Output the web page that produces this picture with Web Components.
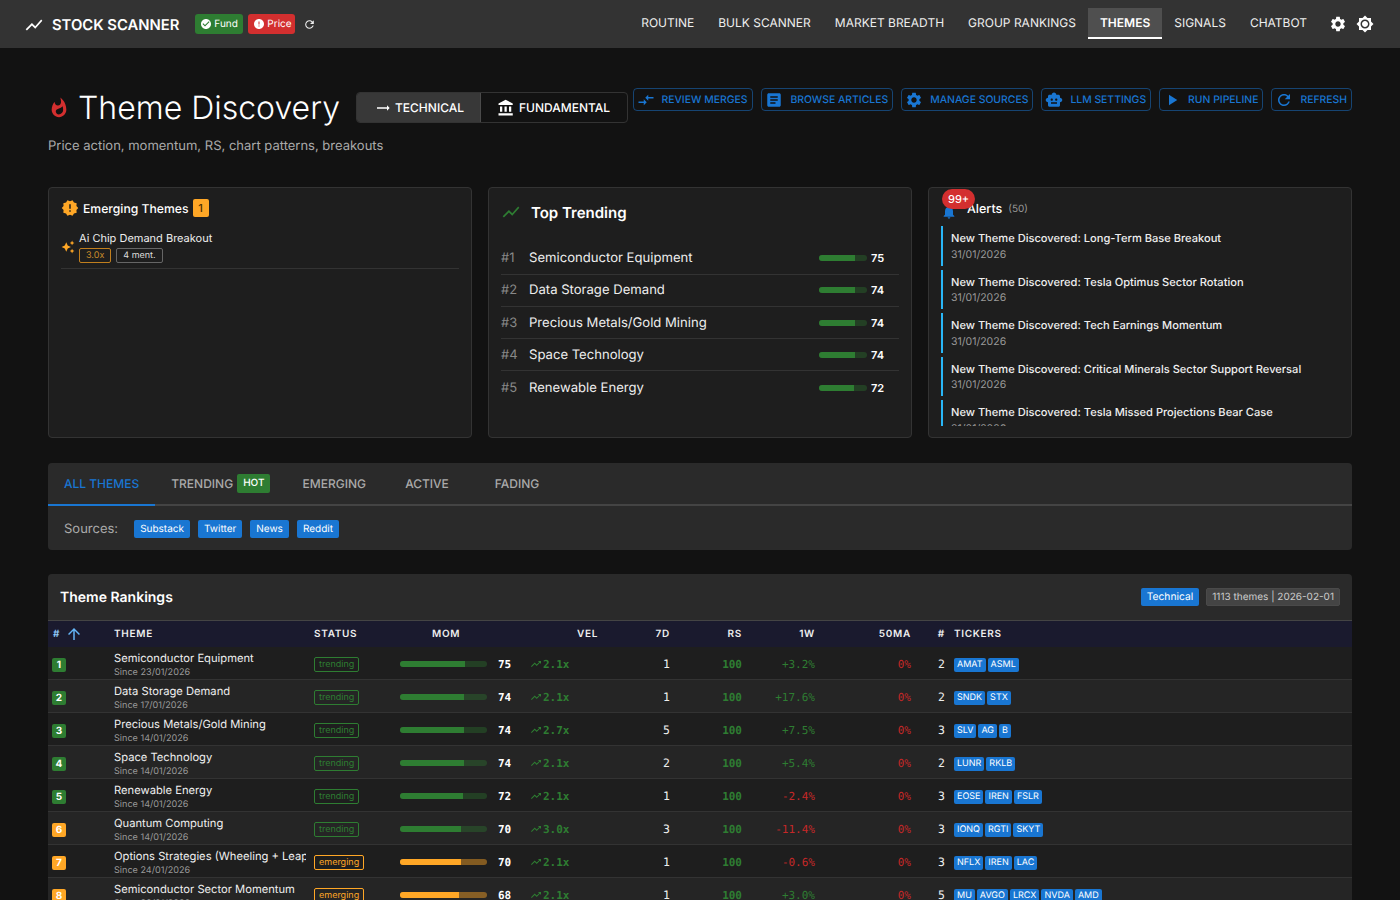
<!DOCTYPE html>
<html lang="en">
<head>
<meta charset="utf-8">
<title>Theme Discovery</title>
<style>
    html, body { margin: 0; height: 100%; overflow: hidden; background: #121212; }
    body { font-family: Inter, "Liberation Sans", sans-serif; color: #fff; text-rendering: geometricPrecision; }
    main { display: block; padding: 40px 48px 0; }
    .cards { display: grid; grid-template-columns: repeat(3, 1fr); gap: 16px; margin-bottom: 25px; }
</style>
</head>
<body>
<stock-navbar></stock-navbar>
<main>
    <page-header></page-header>
    <div class="cards">
        <emerging-card></emerging-card>
        <trending-card></trending-card>
        <alerts-card></alerts-card>
    </div>
    <theme-tabs></theme-tabs>
    <rankings-table></rankings-table>
</main>

<script>
const ICONS = {
    chart: 'M3.5 18.49l6-6.01 4 4L22 6.92l-1.41-1.41-7.09 7.97-4-4L2 16.99z',
    check: 'M12 2C6.48 2 2 6.48 2 12s4.48 10 10 10 10-4.48 10-10S17.52 2 12 2zm-2 15l-5-5 1.41-1.41L10 14.17l7.59-7.59L19 8l-9 9z',
    error: 'M12 2C6.48 2 2 6.48 2 12s4.48 10 10 10 10-4.48 10-10S17.52 2 12 2zm1 15h-2v-2h2v2zm0-4h-2V7h2v6z',
    refresh: 'M17.65 6.35C16.2 4.9 14.21 4 12 4c-4.42 0-7.99 3.58-7.99 8s3.57 8 7.99 8c3.73 0 6.84-2.55 7.73-6h-2.08c-.82 2.33-3.04 4-5.65 4-3.31 0-6-2.69-6-6s2.69-6 6-6c1.66 0 3.14.69 4.22 1.78L13 11h7V4l-2.35 2.35z',
    settings: 'M19.14 12.94c.04-.3.06-.61.06-.94 0-.32-.02-.64-.07-.94l2.03-1.58c.18-.14.23-.41.12-.61l-1.92-3.32c-.12-.22-.37-.29-.59-.22l-2.39.96c-.5-.38-1.03-.7-1.62-.94l-.36-2.54c-.04-.24-.24-.41-.48-.41h-3.84c-.24 0-.43.17-.47.41l-.36 2.54c-.59.24-1.13.57-1.62.94l-2.39-.96c-.22-.08-.47 0-.59.22L2.74 8.87c-.12.21-.08.47.12.61l2.03 1.58c-.05.3-.09.63-.09.94s.02.64.07.94l-2.03 1.58c-.18.14-.23.41-.12.61l1.92 3.32c.12.22.37.29.59.22l2.39-.96c.5.38 1.03.7 1.62.94l.36 2.54c.05.24.24.41.48.41h3.84c.24 0 .44-.17.47-.41l.36-2.54c.59-.24 1.13-.56 1.62-.94l2.39.96c.22.08.47 0 .59-.22l1.92-3.32c.12-.22.07-.47-.12-.61l-2.01-1.58zM12 15.6c-1.98 0-3.6-1.62-3.6-3.6s1.62-3.6 3.6-3.6 3.6 1.62 3.6 3.6-1.62 3.6-3.6 3.6z',
    sun: 'M20 8.69V4h-4.69L12 .69 8.69 4H4v4.69L.69 12 4 15.31V20h4.69L12 23.31 15.31 20H20v-4.69L23.31 12 20 8.69zM12 18c-3.31 0-6-2.69-6-6s2.69-6 6-6 6 2.69 6 6-2.69 6-6 6zm0-10c-2.21 0-4 1.79-4 4s1.79 4 4 4 4-1.79 4-4-1.79-4-4-4z',
    fire: 'M13.5.67s.74 2.65.74 4.8c0 2.06-1.35 3.73-3.41 3.73-2.07 0-3.63-1.67-3.63-3.73l.03-.36C5.21 7.51 4 10.62 4 14c0 4.42 3.58 8 8 8s8-3.58 8-8C20 8.61 17.41 3.8 13.5.67zM11.71 19c-1.78 0-3.22-1.4-3.22-3.14 0-1.62 1.05-2.76 2.81-3.12 1.77-.36 3.6-1.21 4.62-2.58.39 1.29.59 2.65.59 4.04 0 2.65-2.15 4.8-4.8 4.8z',
    flat: 'M22 12l-4-4v3H3v2h15v3z',
    bank: 'M4 10v7h3v-7H4zm6 0v7h3v-7h-3zM2 22h19v-3H2v3zm14-12v7h3v-7h-3zm-4.5-9L2 6v2h19V6l-9.5-5z',
    merge: 'M9.01 14H2v2h7.01v3L13 15l-3.99-4v3zm5.98-1v-3H22V8h-7.01V5L11 9l3.99 4z',
    article: 'M19 3H5c-1.1 0-2 .9-2 2v14c0 1.1.9 2 2 2h14c1.1 0 2-.9 2-2V5c0-1.1-.9-2-2-2zm-5 14H7v-2h7v2zm3-4H7v-2h10v2zm0-4H7V7h10v2z',
    robot: 'M20 9V7c0-1.1-.9-2-2-2h-3c0-1.66-1.34-3-3-3S9 3.34 9 5H6c-1.1 0-2 .9-2 2v2c-1.66 0-3 1.34-3 3s1.34 3 3 3v4c0 1.1.9 2 2 2h12c1.1 0 2-.9 2-2v-4c1.66 0 3-1.34 3-3s-1.34-3-3-3zM7.5 11.5c0-.83.67-1.5 1.5-1.5s1.5.67 1.5 1.5S9.83 13 9 13s-1.5-.67-1.5-1.5zM16 17H8v-2h8v2zm-1-4c-.83 0-1.5-.67-1.5-1.5S14.17 10 15 10s1.5.67 1.5 1.5S15.83 13 15 13z',
    play: 'M8 5v14l11-7z',
    release: 'M23 12l-2.44-2.78.34-3.68-3.61-.82-1.89-3.18L12 3 8.6 1.54 6.71 4.72l-3.61.81.34 3.68L1 12l2.44 2.78-.34 3.69 3.61.82 1.89 3.18L12 21l3.4 1.46 1.89-3.18 3.61-.82-.34-3.68L23 12zm-10 5h-2v-2h2v2zm0-4h-2V7h2v6z',
    sparkle: 'M19 9l1.25-2.75L23 5l-2.75-1.25L19 1l-1.25 2.75L15 5l2.75 1.25L19 9zm-7.5.5L9 4 6.5 9.5 1 12l5.5 2.5L9 20l2.5-5.5L17 12l-5.5-2.5zM19 15l-1.25 2.75L15 19l2.75 1.25L19 23l1.25-2.75L23 19l-2.75-1.25L19 15z',
    bell: 'M12 22c1.1 0 2-.9 2-2h-4c0 1.1.89 2 2 2zm6-6v-5c0-3.07-1.64-5.64-4.5-6.32V4c0-.83-.67-1.5-1.5-1.5s-1.5.67-1.5 1.5v.68C7.63 5.36 6 7.92 6 11v5l-2 2v1h16v-1l-2-2z',
    up: 'M4 12l1.41 1.41L11 7.83V20h2V7.83l5.58 5.59L20 12l-8-8-8 8z',
    trend: 'M16 6l2.29 2.29-4.88 4.88-4-4L2 16.59 3.41 18l6-6 4 4 6.3-6.29L22 12V6z'
};

function icon(name, size, color) {
    return `<svg width="${size}" height="${size}" viewBox="0 0 24 24" fill="${color || 'currentColor'}" style="flex:none;display:block"><path d="${ICONS[name]}"/></svg>`;
}

const BASE = `
    * { box-sizing: border-box; }
    :host { display: block; box-sizing: border-box; font-family: Inter, "Liberation Sans", sans-serif; }
`;

class StockNavbar extends HTMLElement {
    connectedCallback() {
        this.attachShadow({ mode: 'open' });
        const links = ['Routine', 'Bulk Scanner', 'Market Breadth', 'Group Rankings', 'Themes', 'Signals', 'Chatbot'];
        this.shadowRoot.innerHTML = `
            <style>${BASE}
                :host { height: 48px; background: #333; color: #fff; }
                nav { height: 48px; display: flex; align-items: center; padding: 0 26px 0 24px; }
                .brand { display: flex; align-items: center; gap: 8px; font-size: 14.8px; font-weight: 600; margin-right: 15px; padding-top: 1px; }
                .status { display: flex; align-items: center; height: 20px; gap: 2px; padding: 0 0 0 5px; margin-right: 5px; border-radius: 3px; font-size: 10px; }
                .ok { background: #2e7d32; width: 48px; margin-left: 1px; }
                .bad { background: #d32f2f; width: 47px; }
                .reload { margin-left: 3px; color: #eee; }
                .links { margin-left: auto; display: flex; align-items: center; }
                .links a { display: block; height: 31px; line-height: 30px; padding: 0 12px; font-size: 12px; color: #eee; text-transform: uppercase; margin-top: -1px; }
                .links a.active { background: #4f4f4f; color: #fff; font-weight: 600; border-bottom: 2px solid #fff; }
                .actions { display: flex; gap: 9px; margin-left: 10px; }
            </style>
            <nav>
                <div class="brand">${icon('chart', 20)}<span>STOCK SCANNER</span></div>
                <span class="status ok">${icon('check', 12)}Fund</span>
                <span class="status bad">${icon('error', 12)}Price</span>
                <span class="reload">${icon('refresh', 13)}</span>
                <div class="links">
                    ${links.map(l => `<a class="${l === 'Themes' ? 'active' : ''}">${l}</a>`).join('')}
                </div>
                <div class="actions">${icon('settings', 18)}${icon('sun', 18)}</div>
            </nav>
        `;
    }
}

class PageHeader extends HTMLElement {
    connectedCallback() {
        this.attachShadow({ mode: 'open' });
        const buttons = [
            ['merge', 'Review Merges'], ['article', 'Browse Articles'], ['settings', 'Manage Sources'],
            ['robot', 'LLM Settings'], ['play', 'Run Pipeline'], ['refresh', 'Refresh']
        ];
        this.shadowRoot.innerHTML = `
            <style>${BASE}
                :host { margin-bottom: 31px; }
                .top { display: flex; align-items: flex-start; justify-content: space-between; }
                .left { display: flex; align-items: center; height: 40px; flex: none; }
                h1 { margin: 0 16px 0 8px; width: 262px; font-size: 32px; font-weight: 300; line-height: 40px; color: #fff; white-space: nowrap; }
                .toggle { display: flex; height: 31px; margin-top: -1px; border: 1px solid #333; border-radius: 4px; font-size: 12px; font-weight: 500; color: #fff; }
                .toggle span { display: flex; align-items: center; gap: 4px; }
                .toggle .on { background: #383838; border-radius: 3px 0 0 3px; border-right: 1px solid #4a4a4a; width: 124px; padding: 0 0 0 18px; }
                .toggle .off { padding: 0 17px 0 16px; }
                .btns { display: flex; gap: 8px; flex: none; }
                .btns a { display: flex; align-items: center; gap: 7px; height: 23px; padding: 0 4px 0 3px; border: 1px solid rgba(25,118,210,.5); border-radius: 4px; color: #1976d2; font-size: 10.4px; font-weight: 500; text-transform: uppercase; white-space: nowrap; }
                .btns a:first-child { padding-right: 5px; }
                p { margin: 8px 0 0; font-size: 13px; line-height: 20px; color: #aaa; }
            </style>
            <div class="top">
                <div class="left">
                    ${icon('fire', 22, '#d32f2f')}
                    <h1>Theme Discovery</h1>
                    <div class="toggle">
                        <span class="on">${icon('flat', 16)}TECHNICAL</span>
                        <span class="off">${icon('bank', 18)}FUNDAMENTAL</span>
                    </div>
                </div>
                <div class="btns">
                    ${buttons.map(b => `<a>${icon(b[0], 18)}${b[1]}</a>`).join('')}
                </div>
            </div>
            <p>Price action, momentum, RS, chart patterns, breakouts</p>
        `;
    }
}

const CARD = `
    :host { height: 251px; background: #1e1e1e; border: 1px solid #333; border-radius: 4px; padding: 12px; color: #fff; overflow: hidden; position: relative; }
`;

class EmergingCard extends HTMLElement {
    connectedCallback() {
        this.attachShadow({ mode: 'open' });
        this.shadowRoot.innerHTML = `
            <style>${BASE}${CARD}
                .title { display: flex; align-items: center; height: 18px; margin-top: -1px; font-size: 12.2px; font-weight: 500; }
                .title svg { margin-right: 4px; }
                .count { margin-left: 4px; width: 16px; height: 18px; border-radius: 2px; background: #ffa726; color: #4a3000; font-size: 11px; line-height: 18px; text-align: center; }
                .item { display: flex; align-items: center; gap: 4px; margin-top: 13px; padding-bottom: 5px; border-bottom: 1px solid #333; }
                .name { font-size: 11px; line-height: 16px; color: #eee; }
                .chips { display: flex; gap: 5px; margin-top: 2px; }
                .chip { height: 15px; line-height: 13px; padding: 0 6px; border: 1px solid #666; border-radius: 2px; font-size: 9px; color: #ddd; }
                .chip.hot { border-color: #c17f1e; color: #c98a2a; }
            </style>
            <div class="title">${icon('release', 18, '#ffa726')}Emerging Themes<span class="count">1</span></div>
            <div class="item">
                ${icon('sparkle', 14, '#ffa726')}
                <div>
                    <div class="name">Ai Chip Demand Breakout</div>
                    <div class="chips"><span class="chip hot">3.0x</span><span class="chip">4 ment.</span></div>
                </div>
            </div>
        `;
    }
}

class TrendingCard extends HTMLElement {
    connectedCallback() {
        this.attachShadow({ mode: 'open' });
        const rows = [['Semiconductor Equipment', 75], ['Data Storage Demand', 74], ['Precious Metals/Gold Mining', 74], ['Space Technology', 74], ['Renewable Energy', 72]];
        this.shadowRoot.innerHTML = `
            <style>${BASE}${CARD}
                .title { display: flex; align-items: center; gap: 10px; height: 24px; margin-top: 0; font-size: 15px; font-weight: 600; }
                .list { margin-top: 18.3px; }
                .row { display: flex; align-items: center; height: 32.3px; padding-right: 11px; border-bottom: 1px solid #333; font-size: 13.1px; }
                .row:last-child { border-bottom: 0; }
                .rank { width: 28px; color: #888; font-size: 13px; }
                .name { flex: 1; color: #eee; }
                .bar { width: 48px; height: 6px; border-radius: 3px; background: rgba(46,125,50,.35); overflow: hidden; }
                .bar i { display: block; height: 100%; background: #2e7d32; }
                .val { width: 17px; margin-left: 4px; font-size: 11px; font-weight: 600; }
            </style>
            <div class="title">${icon('chart', 20, '#2e7d32')}Top Trending</div>
            <div class="list">
                ${rows.map((r, i) => `
                    <div class="row">
                        <span class="rank">#${i + 1}</span>
                        <span class="name">${r[0]}</span>
                        <span class="bar"><i style="width:${r[1]}%"></i></span>
                        <span class="val">${r[1]}</span>
                    </div>`).join('')}
            </div>
        `;
    }
}

class AlertsCard extends HTMLElement {
    connectedCallback() {
        this.attachShadow({ mode: 'open' });
        const alerts = ['Long-Term Base Breakout', 'Tesla Optimus Sector Rotation', 'Tech Earnings Momentum', 'Critical Minerals Sector Support Reversal', 'Tesla Missed Projections Bear Case'];
        this.shadowRoot.innerHTML = `
            <style>${BASE}${CARD}
                .title { display: flex; align-items: center; height: 18px; font-size: 12.5px; font-weight: 500; position: relative; }
                .title .bell { margin: 5px 10px 0 0; }
                .badge { position: absolute; left: 1px; top: -11px; height: 20px; padding: 0 6px; border-radius: 10px; background: #d32f2f; font-size: 11px; line-height: 20px; }
                .count { margin-left: 6px; font-size: 10px; color: #999; font-weight: 400; }
                .list { height: 200px; margin-top: 8px; overflow: hidden; display: flex; flex-direction: column; gap: 4px; }
                .item { flex: none; height: 39.5px; padding-left: 8px; border-left: 2px solid #29b6f6; }
                .t { font-size: 11.1px; font-weight: 500; line-height: 16px; padding-top: 4px; height: 20.5px; color: #eee; }
                .d { font-size: 10.5px; line-height: 16px; color: #999; }
            </style>
            <div class="title">
                <span class="bell">${icon('bell', 16, '#1976d2')}</span>Alerts<span class="count">(50)</span>
                <span class="badge">99+</span>
            </div>
            <div class="list">
                ${alerts.map(a => `<div class="item"><div class="t">New Theme Discovered: ${a}</div><div class="d">31/01/2026</div></div>`).join('')}
            </div>
        `;
    }
}

class ThemeTabs extends HTMLElement {
    connectedCallback() {
        this.attachShadow({ mode: 'open' });
        this.shadowRoot.innerHTML = `
            <style>${BASE}
                :host { height: 87px; margin-bottom: 24px; background: #2a2a2a; border-radius: 4px; overflow: hidden; }
                .tabs { display: flex; height: 43px; border-bottom: 2px solid #444; }
                .tab { display: flex; align-items: center; justify-content: center; gap: 4px; min-width: 90px; height: 43px; padding: 0 16px; font-size: 12px; font-weight: 500; color: #aaa; border-bottom: 2px solid transparent; }
                .tab.active { color: #1976d2; border-bottom-color: #1976d2; }
                .hot { height: 19px; padding: 0 6px; border-radius: 2px; background: #2e7d32; color: #fff; font-size: 10px; line-height: 19px; }
                .sources { display: flex; align-items: center; gap: 8px; height: 44px; padding: 1px 0 0 16px; font-size: 13px; color: #aaa; }
                .sources b { font-weight: 400; margin-right: 8px; }
                .chip { height: 18px; padding: 0 6px; border-radius: 2px; background: #1976d2; color: #fff; font-size: 10px; line-height: 18px; }
            </style>
            <div class="tabs">
                <div class="tab active">ALL THEMES</div>
                <div class="tab">TRENDING <span class="hot">HOT</span></div>
                <div class="tab">EMERGING</div>
                <div class="tab">ACTIVE</div>
                <div class="tab">FADING</div>
            </div>
            <div class="sources">
                <b>Sources:</b>
                <span class="chip">Substack</span><span class="chip">Twitter</span><span class="chip">News</span><span class="chip">Reddit</span>
            </div>
        `;
    }
}

class RankingsTable extends HTMLElement {
    connectedCallback() {
        this.attachShadow({ mode: 'open' });
        const rows = [
            ['Semiconductor Equipment', '23/01/2026', 'trending', 75, '2.1x', 1, '+3.2%', 2, ['AMAT', 'ASML']],
            ['Data Storage Demand', '17/01/2026', 'trending', 74, '2.1x', 1, '+17.6%', 2, ['SNDK', 'STX']],
            ['Precious Metals/Gold Mining', '14/01/2026', 'trending', 74, '2.7x', 5, '+7.5%', 3, ['SLV', 'AG', 'B']],
            ['Space Technology', '14/01/2026', 'trending', 74, '2.1x', 2, '+5.4%', 2, ['LUNR', 'RKLB']],
            ['Renewable Energy', '14/01/2026', 'trending', 72, '2.1x', 1, '-2.4%', 3, ['EOSE', 'IREN', 'FSLR']],
            ['Quantum Computing', '14/01/2026', 'trending', 70, '3.0x', 3, '-11.4%', 3, ['IONQ', 'RGTI', 'SKYT']],
            ['Options Strategies (Wheeling + Leaps)', '24/01/2026', 'emerging', 70, '2.1x', 1, '-0.6%', 3, ['NFLX', 'IREN', 'LAC']],
            ['Semiconductor Sector Momentum', '20/01/2026', 'emerging', 68, '2.1x', 1, '+3.0%', 5, ['MU', 'AVGO', 'LRCX', 'NVDA', 'AMD']]
        ];
        const widths = [62, 200, 86, 127, 79, 72, 72, 73, 96, 34, 403];
        this.shadowRoot.innerHTML = `
            <style>${BASE}
                :host { background: #2a2a2a; border-radius: 4px 4px 0 0; color: #fff; }
                .head { display: flex; align-items: center; gap: 7px; height: 46px; padding: 0 12px; }
                .head h2 { margin: 0 auto 0 0; font-size: 14px; font-weight: 600; }
                .chip { height: 18px; padding: 0 6px; border-radius: 2px; font-size: 10.3px; line-height: 18px; }
                .blue { background: #1976d2; }
                .grey { background: #444; color: #ccc; border: 1px solid #4a4a4a; line-height: 16px; padding: 0 5px; font-size: 10px; }
                table { width: 1304px; table-layout: fixed; border-collapse: separate; border-spacing: 0; }
                th { height: 27px; padding: 0 4px; background: #1a1a2e; border-top: 1px solid #444; color: #eee; font-size: 10px; font-weight: 600; letter-spacing: .7px; text-align: left; white-space: nowrap; }
                th.r, td.r { text-align: right; }
                th.sort { color: #90caf9; }
                th.sort div { display: flex; align-items: center; gap: 5px; padding-left: 1px; }
                th.mom { padding-left: 36px; }
                th.last { padding-left: 5px; }
                td { height: 33px; padding: 2px 4px 0; border-bottom: 1px solid #333; background: #1e1e1e; font-size: 11px; white-space: nowrap; overflow: hidden; }
                tr:nth-child(even) td { background: #252525; }
                .mono { font-family: "DejaVu Sans Mono", "Liberation Mono", monospace; font-size: 11px; }
                td.big { font-size: 11.5px; color: #eee; }
                .rank { display: block; width: 14px; height: 14px; margin-top: 1px; border-radius: 2px; font-size: 10px; font-weight: 700; line-height: 14px; text-align: center; color: #fff; }
                .name { font-size: 11.2px; line-height: 16px; color: #eee; overflow: hidden; }
                .since { font-size: 9.1px; line-height: 13px; color: #999; }
                .status { display: inline-block; height: 15px; margin-top: 1px; padding: 0 4px; border: 1px solid; border-radius: 2px; font-size: 9px; line-height: 13px; }
                .mombox { display: flex; align-items: center; }
                .bar { width: 87px; height: 6px; border-radius: 3px; overflow: hidden; }
                .bar i { display: block; height: 100%; }
                .momval { margin-left: 11px; font-weight: 700; }
                .vel { display: flex; align-items: center; gap: 1px; color: #2e7d32; font-weight: 700; padding-left: 3px; }
                .green { color: #2e7d32; }
                .red { color: #c62828; }
                b { font-weight: 700; }
                .tick { display: flex; gap: 2px; padding-left: 1px; margin-top: 1px; }
                .tick span { height: 14px; padding: 0 3px; border-radius: 2px; background: #1976d2; color: #fff; font-size: 9px; line-height: 14px; }
            </style>
            <div class="head">
                <h2>Theme Rankings</h2>
                <span class="chip blue">Technical</span>
                <span class="chip grey">1113 themes | 2026-02-01</span>
            </div>
            <table>
                <colgroup>${widths.map(w => `<col style="width:${w}px">`).join('')}</colgroup>
                <thead>
                    <tr>
                        <th class="sort"><div># ${icon('up', 18, '#64b5f6')}</div></th>
                        <th>THEME</th><th>STATUS</th><th class="mom">MOM</th>
                        <th class="r">VEL</th><th class="r">7D</th><th class="r">RS</th><th class="r">1W</th><th class="r">50MA</th><th class="r">#</th><th class="last">TICKERS</th>
                    </tr>
                </thead>
                <tbody>
                    ${rows.map((r, i) => {
                        const color = r[2] === 'trending' ? '#2e7d32' : '#ffa726';
                        const track = r[2] === 'trending' ? 'rgba(46,125,50,.35)' : 'rgba(255,167,38,.45)';
                        return `<tr>
                            <td><span class="rank" style="background:${i < 5 ? '#2e7d32' : '#ffa726'}">${i + 1}</span></td>
                            <td><div class="name">${r[0]}</div><div class="since">Since ${r[1]}</div></td>
                            <td><span class="status" style="color:${color};border-color:${color}">${r[2]}</span></td>
                            <td><div class="mombox"><span class="bar" style="background:${track}"><i style="width:${r[3]}%;background:${color}"></i></span><span class="mono momval">${r[3]}</span></div></td>
                            <td><div class="vel mono">${icon('trend', 12)}${r[4]}</div></td>
                            <td class="r mono big">${r[5]}</td>
                            <td class="r mono green"><b>100</b></td>
                            <td class="r mono ${r[6][0] === '+' ? 'green' : 'red'}">${r[6]}</td>
                            <td class="r mono red">0%</td>
                            <td class="r mono big">${r[7]}</td>
                            <td><div class="tick">${r[8].map(t => `<span>${t}</span>`).join('')}</div></td>
                        </tr>`;
                    }).join('')}
                </tbody>
            </table>
        `;
    }
}

customElements.define('stock-navbar', StockNavbar);
customElements.define('page-header', PageHeader);
customElements.define('emerging-card', EmergingCard);
customElements.define('trending-card', TrendingCard);
customElements.define('alerts-card', AlertsCard);
customElements.define('theme-tabs', ThemeTabs);
customElements.define('rankings-table', RankingsTable);
</script>
</body>
</html>
